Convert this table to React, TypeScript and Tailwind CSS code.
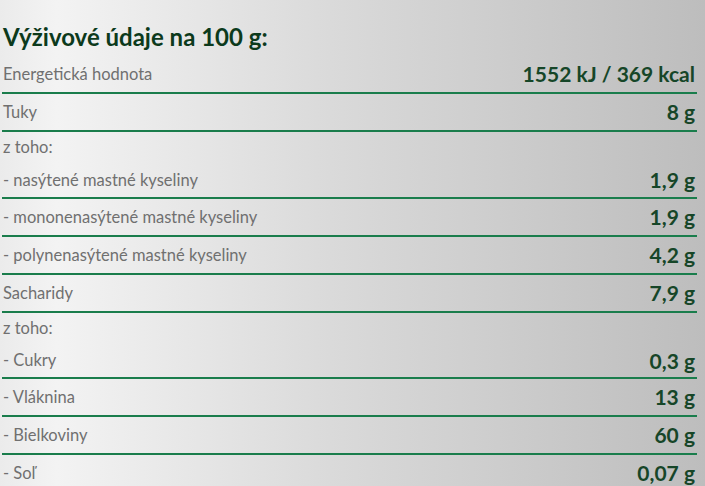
import React from "react";

type Row = { label: string; value?: string; h: string; border: boolean };

const rows: Row[] = [
  { label: "Energetická hodnota", value: "1552 kJ / 369 kcal", h: "h-[36px]", border: true },
  { label: "Tuky", value: "8 g", h: "h-[36px]", border: true },
  { label: "z toho:", h: "h-[31px]", border: false },
  { label: "- nasýtené mastné kyseliny", value: "1,9 g", h: "h-[34px]", border: true },
  { label: "- mononenasýtené mastné kyseliny", value: "1,9 g", h: "h-[36px]", border: true },
  { label: "- polynenasýtené mastné kyseliny", value: "4,2 g", h: "h-[36px]", border: true },
  { label: "Sacharidy", value: "7,9 g", h: "h-[36px]", border: true },
  { label: "z toho:", h: "h-[31px]", border: false },
  { label: "- Cukry", value: "0,3 g", h: "h-[33px]", border: true },
  { label: "- Vláknina", value: "13 g", h: "h-[36px]", border: true },
  { label: "- Bielkoviny", value: "60 g", h: "h-[36px]", border: true },
  { label: "- Soľ", value: "0,07 g", h: "h-[36px]", border: false },
];

export default function App() {
  return (
    <div
      className="w-[705px] h-[486px] overflow-hidden bg-[linear-gradient(to_right,#ebebeb_0%,#f3f3f3_8%,#dbdbdb_45%,#bdbdbd_100%)]"
      style={{ fontFamily: "Lato, 'Open Sans', sans-serif" }}
    >
      <h2 className="pt-[21px] pl-[3px] h-[53px] text-[24px] leading-[32px] font-bold text-[#0c3a1c]">
        Výživové údaje na 100 g:
      </h2>
      <div className="mt-[3px] mx-[2px] w-[695px]">
        {rows.map((r, i) => (
          <div
            key={i}
            className={`flex items-center justify-between pl-[1px] pr-[2px] ${r.h} ${
              r.border ? "border-b-2 border-[#1a7d4c] box-content" : ""
            }`}
          >
            <span className="text-[16.5px] font-normal text-[#707070]">{r.label}</span>
            {r.value && (
              <span className="text-[21px] font-bold text-[#164628]">{r.value}</span>
            )}
          </div>
        ))}
      </div>
    </div>
  );
}
